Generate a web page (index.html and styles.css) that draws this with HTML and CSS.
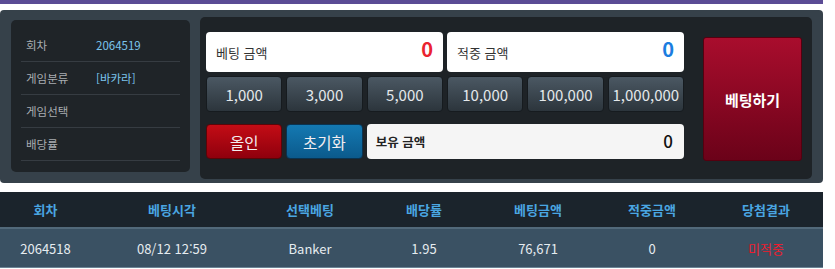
FILE: index.html
```
<!DOCTYPE html>
<html lang="ko">
<head>
<meta charset="utf-8">
<title>베팅</title>
<link rel="stylesheet" href="styles.css">
</head>
<body>
<div class="page">
  <div class="topbar"></div>
  <div class="panel">
    <div class="info">
      <div class="info-row"><span class="info-label">회차</span><span class="info-value">2064519</span></div>
      <div class="info-row"><span class="info-label">게임분류</span><span class="info-value">[바카라]</span></div>
      <div class="info-row"><span class="info-label">게임선택</span><span class="info-value"></span></div>
      <div class="info-row"><span class="info-label">배당률</span><span class="info-value"></span></div>
    </div>
    <div class="bet">
      <div class="bet-grid">
        <div class="field field-half"><span class="field-label">베팅 금액</span><span class="field-value red">0</span></div>
        <div class="field field-half"><span class="field-label">적중 금액</span><span class="field-value blue">0</span></div>
        <button class="chip">1,000</button>
        <button class="chip">3,000</button>
        <button class="chip">5,000</button>
        <button class="chip">10,000</button>
        <button class="chip">100,000</button>
        <button class="chip">1,000,000</button>
        <button class="action allin">올인</button>
        <button class="action reset">초기화</button>
        <div class="field field-hold"><span class="field-label bold">보유 금액</span><span class="field-value dark">0</span></div>
      </div>
      <button class="submit">베팅하기</button>
    </div>
  </div>
  <div class="table">
    <div class="thead">
      <div>회차</div><div>베팅시각</div><div>선택베팅</div><div>배당률</div><div>베팅금액</div><div>적중금액</div><div>당첨결과</div>
    </div>
    <div class="trow">
      <div>2064518</div><div>08/12 12:59</div><div>Banker</div><div>1.95</div><div>76,671</div><div>0</div><div class="lose">미적중</div>
    </div>
  </div>
</div>
</body>
</html>
```
FILE: styles.css
```
* { box-sizing: border-box; }
html, body { margin: 0; padding: 0; background: #ffffff; }
body { font-family: "Noto Sans CJK KR", "Noto Sans", sans-serif; }
.page { width: 823px; }
.topbar { height: 4px; background: #5b4c95; }
.panel {
  margin-top: 6px;
  height: 173px;
  background: #36414a;
  border-radius: 4px;
  display: flex;
  align-items: flex-start;
  padding: 7px 11px 0 11px;
  gap: 10px;
}
.info {
  margin-top: 3px;
  width: 179px;
  height: 152px;
  background: #1f2428;
  border-radius: 5px;
  padding: 9px 10px 0 10px;
}
.info-row {
  height: 33px;
  border-bottom: 1px solid #363c42;
  display: flex;
  align-items: center;
  font-size: 11.5px;
}
.info-label { width: 75px; padding-left: 5px; color: #a9adb1; }
.info-value { color: #7cc4ec; }
.bet {
  flex: 1;
  height: 162px;
  background: #1e2327;
  border-radius: 5px;
  display: flex;
  align-items: flex-start;
  padding: 15px 10px 0 6px;
}
.bet-grid {
  width: 478px;
  display: grid;
  grid-template-columns: repeat(6, 1fr);
  grid-template-rows: 40px 40px 47px;
  column-gap: 4px;
}
.field {
  background: #ffffff;
  border-radius: 4px;
  display: flex;
  align-items: center;
  justify-content: space-between;
  padding: 0 10px 0 10px;
}
.field-half { grid-column: span 3; }
.field-hold { grid-column: span 4; background: #f5f5f5; margin-top: 12px; padding: 0 11px 0 9px; }
.field-label { font-size: 13px; color: #333333; }
.field-label.bold { font-weight: 700; color: #222; font-size: 12.5px; }
.field-value { font-weight: 700; font-size: 20px; line-height: 1; margin-top: -6px; }
.field-value.red { color: #ea2330; }
.field-value.blue { color: #1b7de0; }
.field-value.dark { color: #111; font-size: 17px; font-weight: 500; margin-top: -2px; }
.chip, .action, .submit {
  font-family: "Noto Sans CJK KR", "Noto Sans", sans-serif;
  border-radius: 4px;
  padding: 0;
  cursor: pointer;
}
.chip {
  margin-top: 4px;
  height: 36px;
  border: 1px solid #161b1f;
  background: linear-gradient(#4b5863, #2c353c);
  color: #e4e8eb;
  font-size: 15px;
}
.action {
  margin-top: 12px;
  height: 35px;
  font-size: 15.5px;
  color: #f3eef0;
}
.allin { background: linear-gradient(#c30c15, #8f000d); border: 1px solid #5a0508; }
.reset { background: linear-gradient(#1479b2, #0b5a8c); border: 1px solid #0a3350; }
.submit {
  margin-left: 19px;
  margin-top: 5px;
  width: 99px;
  height: 124px;
  border: 1px solid #55000f;
  border-radius: 3px;
  background: linear-gradient(#a90d2d, #6b0219);
  color: #ffffff;
  font-weight: 700;
  font-size: 15px;
}
.table { margin-top: 9px; }
.thead, .trow {
  display: grid;
  grid-template-columns: 91px 162px repeat(5, 114px);
  text-align: center;
  align-items: center;
}
.thead {
  height: 37px;
  background: #1b242c;
  color: #4aa6e2;
  font-weight: 700;
  font-size: 13px;
  border-bottom: 2px solid #52697a;
}
.trow {
  height: 39px;
  background: #3a5163;
  color: #e6ecf0;
  font-size: 13px;
  border-bottom: 1px solid #6c8496;
}
.lose { color: #ee1c2e; }
```
